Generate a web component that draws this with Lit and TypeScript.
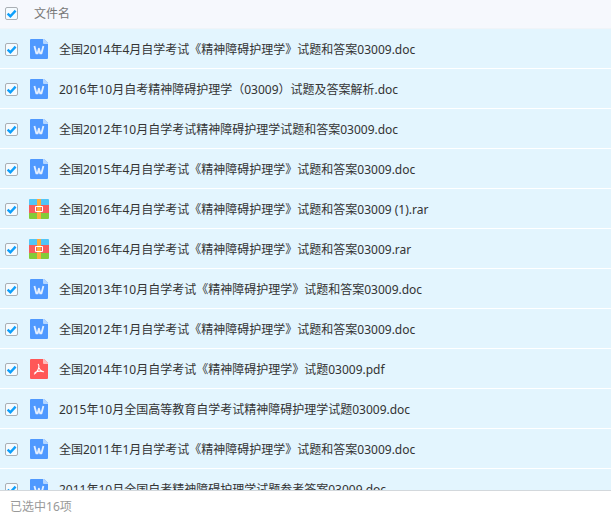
import { LitElement, html, css } from "lit";
import { customElement, state } from "lit/decorators.js";

type FileKind = "doc" | "rar" | "pdf";

interface FileEntry {
  name: string;
  kind: FileKind;
}

const entries: FileEntry[] = [
  { name: "全国2014年4月自学考试《精神障碍护理学》试题和答案03009.doc", kind: "doc" },
  { name: "2016年10月自考精神障碍护理学（03009）试题及答案解析.doc", kind: "doc" },
  { name: "全国2012年10月自学考试精神障碍护理学试题和答案03009.doc", kind: "doc" },
  { name: "全国2015年4月自学考试《精神障碍护理学》试题和答案03009.doc", kind: "doc" },
  { name: "全国2016年4月自学考试《精神障碍护理学》试题和答案03009 (1).rar", kind: "rar" },
  { name: "全国2016年4月自学考试《精神障碍护理学》试题和答案03009.rar", kind: "rar" },
  { name: "全国2013年10月自学考试《精神障碍护理学》试题和答案03009.doc", kind: "doc" },
  { name: "全国2012年1月自学考试《精神障碍护理学》试题和答案03009.doc", kind: "doc" },
  { name: "全国2014年10月自学考试《精神障碍护理学》试题03009.pdf", kind: "pdf" },
  { name: "2015年10月全国高等教育自学考试精神障碍护理学试题03009.doc", kind: "doc" },
  { name: "全国2011年1月自学考试《精神障碍护理学》试题和答案03009.doc", kind: "doc" },
  { name: "2011年10月全国自考精神障碍护理学试题参考答案03009.doc", kind: "doc" },
];

// Selected files that sit further down, on pages not loaded yet.
const selectedElsewhere = 4;

const icons = {
  doc: html`<svg width="20" height="20" viewBox="0 0 20 20" aria-hidden="true">
    <path d="M2 0H15L19 4V19a1 1 0 0 1-1 1H2a1 1 0 0 1-1-1V1a1 1 0 0 1 1-1z" fill="#4f99ff" />
    <path d="M15 0L19 4V5H15a1 1 0 0 1-1-1V0z" fill="#b5d6ff" />
    <path d="M5.4 7L7.4 14.4H8.6L9.9 9.6L11.2 14.4H12.4L14.4 7" fill="none" stroke="#e4f0ff" stroke-width="1.8" stroke-linejoin="round" />
  </svg>`,
  rar: html`<svg width="20" height="20" viewBox="0 0 20 20" aria-hidden="true">
    <path d="M0 6V1a1 1 0 0 1 1-1H19a1 1 0 0 1 1 1V6z" fill="#52c5f6" />
    <path d="M0 6H20V14H0z" fill="#f95c5c" />
    <path d="M0 14H20V19a1 1 0 0 1-1 1H1a1 1 0 0 1-1-1z" fill="#83cc39" />
    <path d="M8 0H12V20H8z" fill="#ffac38" />
    <path d="M6.5 7.5H13.5V12.5H6.5z" fill="none" stroke="#fff" />
  </svg>`,
  pdf: html`<svg width="20" height="20" viewBox="0 0 20 20" aria-hidden="true">
    <path d="M2 0H15L19 4V19a1 1 0 0 1-1 1H2a1 1 0 0 1-1-1V1a1 1 0 0 1 1-1z" fill="#ff5757" />
    <path d="M15 0L19 4V5H15a1 1 0 0 1-1-1V0z" fill="#ffbcbc" />
    <path d="M9.3 5.4C10.6 6.8 9.7 9.3 8.7 11.3C7.7 13.2 6.6 14.6 5.4 15M6 13.5C8.6 12.1 11.6 11.6 14.6 12.7M9.6 8.4C10.5 10.5 12 12 14.3 12.8" fill="none" stroke="#fff" stroke-width="1.1" stroke-linecap="round" />
  </svg>`,
};

const tick = html`<svg class="tick" width="13" height="13" viewBox="0 0 13 13" aria-hidden="true">
  <path d="M2.6 6.6L5.4 9.2L10.6 3.6" fill="none" stroke="#0d9ffb" stroke-width="2.4" />
</svg>`;

@customElement("app-root")
export class AppRoot extends LitElement {
  static styles = css`
    :host {
      display: flex;
      flex-direction: column;
      height: 100vh;
      overflow: hidden;
      background: #fff;
      color: #333;
      font: 12px/16px "Noto Sans", "Noto Sans CJK SC", sans-serif;
      text-spacing-trim: space-all;
    }
    .list {
      flex: 1;
      min-height: 0;
      overflow: hidden;
    }
    .files {
      width: 100%;
      border-collapse: separate;
      border-spacing: 0;
    }
    .head,
    .cell {
      box-sizing: border-box;
      padding: 0;
      text-align: left;
      font-weight: normal;
      white-space: nowrap;
    }
    .head {
      height: 29px;
      padding-bottom: 1px;
      background: #f6f8fd;
      border-bottom: 1px solid #f0f4f8;
      color: #777;
    }
    .cell {
      height: 40px;
      padding-top: 1px;
      border-bottom: 1px solid #fff;
    }
    .selected {
      background: #e3f5fe;
    }
    .pick {
      width: 29px;
      padding-left: 5px;
    }
    .title {
      padding-left: 5px;
    }
    .file {
      display: flex;
      align-items: center;
      gap: 10px;
    }
    .name {
      padding-top: 2px;
    }
    .box {
      display: grid;
      width: 13px;
      height: 13px;
    }
    .check {
      grid-area: 1 / 1;
      appearance: none;
      box-sizing: border-box;
      width: 13px;
      height: 13px;
      margin: 0;
      border: 1px solid #aaafb4;
      border-radius: 2px;
      background: #f5fbff;
    }
    .tick {
      grid-area: 1 / 1;
      pointer-events: none;
      visibility: hidden;
    }
    .check:checked + .tick {
      visibility: visible;
    }
    .status {
      flex: none;
      padding: 8px 10px 4px;
      border-top: 1px solid #d3d8dc;
      background: #fff;
      color: #999;
    }
  `;

  @state() private chosen = new Set<number>(entries.map((_, i) => i));

  private toggle(index: number) {
    const next = new Set(this.chosen);
    if (!next.delete(index)) next.add(index);
    this.chosen = next;
  }

  private toggleAll(event: Event) {
    const on = (event.target as HTMLInputElement).checked;
    this.chosen = new Set(on ? entries.map((_, i) => i) : []);
  }

  private row(entry: FileEntry, index: number) {
    const on = this.chosen.has(index);
    return html`<tr class=${on ? "selected" : ""}>
      <td class="cell pick">
        <div class="box">
          <input class="check" type="checkbox" id="file-${index}" .checked=${on} @change=${() => this.toggle(index)} />${tick}
        </div>
      </td>
      <td class="cell">
        <label class="file" for="file-${index}">${icons[entry.kind]}<span class="name">${entry.name}</span></label>
      </td>
    </tr>`;
  }

  render() {
    return html`
      <main class="list">
        <table class="files">
          <thead>
            <tr>
              <th class="head pick">
                <div class="box">
                  <input class="check" type="checkbox" id="all" .checked=${this.chosen.size === entries.length} @change=${this.toggleAll} />${tick}
                </div>
              </th>
              <th class="head title"><label for="all">文件名</label></th>
            </tr>
          </thead>
          <tbody>
            ${entries.map((entry, index) => this.row(entry, index))}
          </tbody>
        </table>
      </main>
      <footer class="status">已选中${this.chosen.size + selectedElsewhere}项</footer>
    `;
  }
}
